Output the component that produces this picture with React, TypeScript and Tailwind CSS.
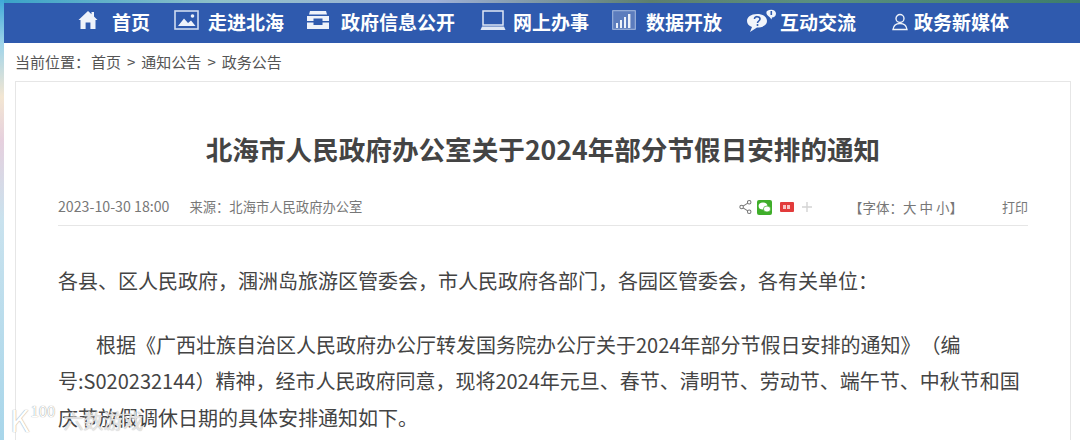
const font = "font-['Microsoft_YaHei','Noto_Sans_CJK_SC',sans-serif]";

function NavItem({ icon, label, className = "" }: { icon: React.ReactNode; label: string; className?: string }) {
  return (
    <div className={`flex items-center shrink-0 -mt-[3px] ${className}`}>
      {icon}
      <span className="text-[19px] font-bold text-white leading-[34px] whitespace-nowrap">{label}</span>
    </div>
  );
}

const HomeIcon = (
  <svg width="20" height="20" viewBox="0 0 20 20" className="mr-[14px] -mt-[3px]" fill="#eef2fa">
    <path d="M10 1 L13.5 4.2 V2 H16 V6.6 L19.5 10 H17.5 V19 H12.4 V12.5 H7.6 V19 H2.5 V10 H0.5 Z" />
  </svg>
);
const PicIcon = (
  <svg width="25" height="20" viewBox="0 0 25 20" className="mr-[9px] -mt-[3px]">
    <rect x="1" y="1" width="23" height="18" fill="none" stroke="#cfdbf0" strokeWidth="1.6" />
    <circle cx="18.5" cy="6" r="1.8" fill="#eef2fa" />
    <path d="M4 16 L10 8.5 L14 13 L17 10.5 L21.5 16 Z" fill="#eef2fa" />
  </svg>
);
const CabinetIcon = (
  <svg width="22" height="20" viewBox="0 0 22 20" className="mr-[12px] -mt-[3px]" fill="#eef2fa">
    <path d="M3 1 H19 L20 4.5 H2 Z" />
    <path d="M0 6 H22 V11 H15.5 V8.5 H6.5 V11 H0 Z" />
    <path d="M0 12.5 H6.5 V15 H15.5 V12.5 H22 V19 H0 Z" />
  </svg>
);
const LaptopIcon = (
  <svg width="26" height="20" viewBox="0 0 26 20" className="mr-[7px] -mt-[3px]" fill="none">
    <rect x="3" y="1" width="20" height="14" stroke="#dfe7f5" strokeWidth="1.5" />
    <path d="M0.5 20 L2 16.5 H24 L25.5 20 Z" fill="#dfe7f5" />
  </svg>
);
const ChartIcon = (
  <svg width="24" height="20" viewBox="0 0 24 20" className="mr-[10px] -mt-[3px]">
    <rect x="0.7" y="0.7" width="22.6" height="18.6" fill="#5c7cbd" stroke="#a9bce0" strokeWidth="1" />
    <rect x="4" y="13" width="2" height="5" fill="#eef2fa" />
    <rect x="8" y="10" width="2" height="8" fill="#eef2fa" />
    <rect x="12" y="7" width="2" height="11" fill="#eef2fa" />
    <rect x="16" y="4" width="2.4" height="14" fill="#eef2fa" />
  </svg>
);
const ChatIcon = (
  <svg width="30" height="24" viewBox="0 0 30 24" className="mr-[4px] -mt-[1px]">
    <path d="M11 5 C5 5 1 8 1 12 C1 15 3 17 6 18 L4 23 L11 18.5 C17 18.5 21 16 21 12 C21 8 17 5 11 5 Z" fill="#f2f5fb" />
    <path d="M8.5 10 C8.5 6.8 14 7 14 10 C14 12 11.5 12 11.5 14" fill="none" stroke="#2f5aae" strokeWidth="1.6" />
    <circle cx="11.5" cy="16" r="1" fill="#2f5aae" />
    <path d="M21 2 C25 -0.5 30 1 30 4.5 C30 7 28 8.5 26 8.5 L25.5 10.5 L23.5 8 C21 6.5 19.5 4 21 2 Z" fill="#f2f5fb" />
    <rect x="24.5" y="2" width="1.6" height="4" fill="#2f5aae" />
  </svg>
);
const UserIcon = (
  <svg width="16" height="18" viewBox="0 0 16 18" className="mr-[6px]" fill="none" stroke="#eef2fa" strokeWidth="1.4">
    <circle cx="8" cy="5.5" r="4" />
    <path d="M1 16.5 C1.5 12.5 4.5 10.5 8 10.5 C11.5 10.5 14.5 12.5 15 16.5 Z" />
  </svg>
);

export default function App() {
  return (
    <div className={`${font} [text-spacing-trim:space-all] relative w-[1080px] h-[440px] overflow-hidden bg-[linear-gradient(180deg,#3fa9d8_0%,#9fd4ea_10%,#f3e6d2_22%,#e6d0de_32%,#c9e2ee_50%,#a8d6ea_100%)]`}>
      <div className="h-[3px] ml-[4px] bg-[linear-gradient(90deg,#3aa3c9_0%,#8fc0c8_20%,#9fb0d8_40%,#5d7f6e_60%,#5a9080_75%,#3d7d6c_100%)]" />
      <div className="ml-[4px] bg-white h-[437px]">
        <nav className="h-[40px] bg-[#2f5aae] flex items-center pl-[74px]">
          <NavItem icon={HomeIcon} label="首页" className="mr-[24px]" />
          <NavItem icon={PicIcon} label="走进北海" className="mr-[23px]" />
          <NavItem icon={CabinetIcon} label="政府信息公开" className="mr-[25px]" />
          <NavItem icon={LaptopIcon} label="网上办事" className="mr-[23px]" />
          <NavItem icon={ChartIcon} label="数据开放" className="mr-[24px]" />
          <NavItem icon={ChatIcon} label="互动交流" className="mr-[36px]" />
          <NavItem icon={UserIcon} label="政务新媒体" />
        </nav>

        <div className="h-[38px] pl-[11px] flex items-center text-[15px] text-[#555555] whitespace-nowrap">
          <span>当前位置：</span>
          <span className="ml-px">首页</span>
          <span className="mx-[6px]">&gt;</span>
          <span>通知公告</span>
          <span className="mx-[6px]">&gt;</span>
          <span>政务公告</span>
        </div>

        <div className="ml-[11px] mr-[9px] border border-[#e6e6e6] h-[400px] pl-[42px] pr-[42px]">
          <h1 className="text-[26.6px] font-bold text-[#444444] text-center leading-[36px] mt-[49px] whitespace-nowrap">
            北海市人民政府办公室关于2024年部分节假日安排的通知
          </h1>

          <div className="mt-[19px] h-[40px] pt-[3px] border-b border-[#e6e6e6] flex items-center text-[13px] text-[#777777] whitespace-nowrap">
            <span className="mr-[20px] text-[14.2px]">2023-10-30 18:00</span>
            <span className="text-[13.3px]">来源：北海市人民政府办公室</span>
            <div className="ml-auto flex items-center">
              <svg width="13" height="16" viewBox="0 0 14 16" fill="none" stroke="#777777" strokeWidth="1.1" className="mr-[5px]">
                <circle cx="11" cy="2.8" r="1.9" />
                <circle cx="2.8" cy="8" r="1.9" />
                <circle cx="11" cy="13.2" r="1.9" />
                <path d="M4.4 7 L9.4 3.8 M4.4 9 L9.4 12.2" />
              </svg>
              <span className="w-[15px] h-[15px] rounded-[2px] bg-[#3fae2a] flex items-center justify-center mr-[8px]">
                <svg width="13" height="11" viewBox="0 0 13 11" fill="#ffffff">
                  <ellipse cx="5" cy="4" rx="4.4" ry="3.6" />
                  <ellipse cx="9" cy="7" rx="3.6" ry="3" stroke="#3fae2a" strokeWidth="0.7" />
                </svg>
              </span>
              <span className="w-[14px] h-[10px] rounded-[1px] bg-[#e23b3b] flex items-center justify-center gap-[1px] mr-[8px]">
                <span className="w-[3px] h-[4px] bg-[#f7c4c4]" />
                <span className="w-[3px] h-[4px] bg-[#f7c4c4]" />
              </span>
              <svg width="10" height="10" viewBox="0 0 10 10" stroke="#d4d4d4" strokeWidth="1.4" className="mr-[37px]">
                <path d="M5 0 V10 M0 5 H10" />
              </svg>
              <span className="mr-[39px] text-[13.5px]">【字体：大 中 小】</span>
              <span>打印</span>
            </div>
          </div>

          <div className="text-[20px] text-[#444444] leading-[36.6px]">
            <p className="mt-[37px] whitespace-nowrap">各县、区人民政府，涠洲岛旅游区管委会，市人民政府各部门，各园区管委会，各有关单位：</p>
            <p className="mt-[27px] indent-[38px]">
              根据《广西壮族自治区人民政府办公厅转发国务院办公厅关于2024年部分节假日安排的通知》（编号:S020232144）精神，经市人民政府同意，现将2024年元旦、春节、清明节、劳动节、端午节、中秋节和国庆节放假调休日期的具体安排通知如下。
            </p>
          </div>
        </div>
      </div>

      <div className="absolute left-[10px] bottom-[4px] flex items-center pointer-events-none">
        <span className="text-[30px] leading-[30px] text-white [text-shadow:0_0_1px_#707070] mr-[1px]">K</span>
        <span className="text-[15px] leading-[20px] -mt-[16px] mr-[8px] text-white [text-shadow:0_0_1px_#707070]">100</span>
        <span className="text-[20px] leading-[30px] text-white/70 [text-shadow:0_0_1px_#a0a0a0] mt-[4px]">六数游戏</span>
      </div>
    </div>
  );
}
